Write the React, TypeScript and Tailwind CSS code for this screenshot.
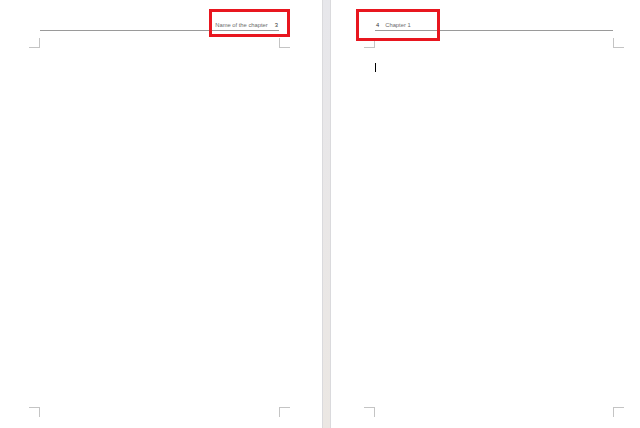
import React from "react";

function Mark({ kind }: { kind: "tl" | "tr" | "bl" | "br" }) {
  const cls: Record<string, string> = {
    tl: "border-r border-b",
    tr: "border-l border-b",
    bl: "border-r border-t",
    br: "border-l border-t",
  };
  return <div className={`h-[10px] w-[11px] border-[#c4c4c4] ${cls[kind]}`} />;
}

function Page({
  side,
}: {
  side: "left" | "right";
}) {
  const isLeft = side === "left";
  return (
    <div className={`relative flex h-full flex-col bg-white ${isLeft ? "w-[322px]" : "flex-1"}`}>
      {isLeft ? (
        <div className="ml-[40px] mr-[43px] mt-[21px] flex h-[10px] items-center justify-end gap-[7px] border-b border-[#9a9a9a] pr-[1px] text-[5.8px] leading-none text-[#6b6b6b]">
          <span>Name of the chapter</span>
          <span className="text-[#333]">3</span>
        </div>
      ) : (
        <div className="ml-[44px] mr-[27px] mt-[21px] flex h-[10px] items-center gap-[6px] border-b border-[#9a9a9a] pl-[1px] text-[5.8px] leading-none text-[#6b6b6b]">
          <span className="text-[#333]">4</span>
          <span>Chapter 1</span>
        </div>
      )}
      <div className={`mt-[7px] flex justify-between ${isLeft ? "pl-[29px] pr-[32px]" : "pl-[33px] pr-[16px]"}`}>
        <Mark kind="tl" />
        <Mark kind="tr" />
      </div>
      <div className="flex-1">
        {!isLeft && <div className="ml-[44px] mt-[15px] h-[9px] w-px bg-black" />}
      </div>
      <div className={`mb-[11px] flex justify-between ${isLeft ? "pl-[29px] pr-[32px]" : "pl-[33px] pr-[16px]"}`}>
        <Mark kind="bl" />
        <Mark kind="br" />
      </div>
      {isLeft ? (
        <div className="absolute left-[209px] top-[9px] h-[28px] w-[81px] border-[3px] border-[#e8161f]" />
      ) : (
        <div className="absolute left-[25px] top-[9px] h-[32px] w-[84px] border-[3px] border-[#e8161f]" />
      )}
    </div>
  );
}

export default function App() {
  return (
    <div
      className="flex h-[428px] w-[640px] overflow-hidden bg-white"
      style={{ fontFamily: '"Liberation Sans", "Open Sans", sans-serif' }}
    >
      <Page side="left" />
      <div className="h-full w-[9px] border-x border-[#dadadd] bg-gradient-to-b from-[#e7e7eb] to-[#ebe7e3]" />
      <Page side="right" />
    </div>
  );
}
